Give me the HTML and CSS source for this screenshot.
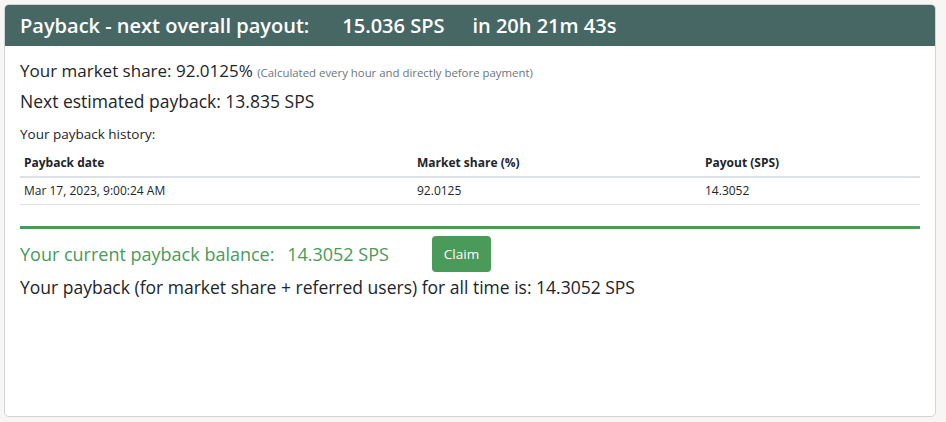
FILE: index.html
```html
<!DOCTYPE html>
<html lang="en">
<head>
    <meta charset="UTF-8">
    <meta name="viewport" content="width=device-width, initial-scale=1.0">
    <title>Payback</title>
    <link rel="stylesheet" href="styles.css">
</head>
<body>
    <div class="card">
        <!-- Header -->
        <div class="card-header">
            <span>Payback - next overall payout:</span>
            <span class="amount">15.036 SPS</span>
            <span class="countdown">in 20h 21m 43s</span>
        </div>

        <div class="card-body">
            <p class="share">Your market share: 92.0125% <small>(Calculated every hour and directly before payment)</small></p>
            <p class="estimate">Next estimated payback: 13.835 SPS</p>

            <p class="history-title">Your payback history:</p>
            <table class="history">
                <thead>
                    <tr>
                        <th class="col-date">Payback date</th>
                        <th class="col-share">Market share (%)</th>
                        <th>Payout (SPS)</th>
                    </tr>
                </thead>
                <tbody>
                    <tr>
                        <td>Mar 17, 2023, 9:00:24 AM</td>
                        <td>92.0125</td>
                        <td>14.3052</td>
                    </tr>
                </tbody>
            </table>

            <div class="balance">
                <span class="balance-text">Your current payback balance: <span class="balance-value">14.3052 SPS</span></span>
                <button class="claim">Claim</button>
            </div>
            <p class="total">Your payback (for market share + referred users) for all time is: 14.3052 SPS</p>
        </div>
    </div>
</body>
</html>
```

FILE: styles.css
```css
body {
    font-family: "Open Sans", "Noto Sans", sans-serif;
    margin: 0;
    padding: 4px 10px 4px 4px;
    background-color: #f7f6f4;
    color: #212529;
}
.card {
    height: 413px;
    box-sizing: border-box;
    background-color: #fff;
    border: 1px solid #d3d3d3;
    border-radius: 5px;
    overflow: hidden;
}
.card-header {
    height: 41px;
    display: flex;
    align-items: center;
    padding: 0 15px;
    background-color: #476765;
    color: #fff;
    font-size: 20px;
    font-weight: 600;
}
.card-header .amount {
    margin-left: 33px;
}
.card-header .countdown {
    margin-left: 28px;
}
.card-body {
    padding: 13px 15px;
}
p {
    margin: 0;
}
.share {
    font-size: 17px;
    line-height: 24px;
}
.share small {
    font-size: 11.4px;
    color: #6c757d;
}
.estimate {
    font-size: 17.5px;
    line-height: 24px;
    margin-top: 4px;
}
.history-title {
    font-size: 13.5px;
    font-weight: 500;
    margin-top: 11px;
    line-height: 20px;
}
.history {
    width: 100%;
    border-collapse: collapse;
    font-size: 12px;
    margin-top: 5px;
}
.history th,
.history td {
    text-align: left;
    padding: 5px 4px;
    border-bottom: 1px solid #dee2e6;
}
.history td {
    padding: 4px 4px 5px;
}
.history th {
    border-bottom-width: 2px;
}
.col-date {
    width: 385px;
}
.col-share {
    width: 280px;
}
.balance {
    margin-top: 21px;
    border-top: 3px solid #4a9a5a;
    padding-top: 7px;
    display: flex;
    align-items: center;
}
.balance-text {
    color: #4a9a5a;
    font-size: 18px;
}
.balance-value {
    margin-left: 8px;
}
.claim {
    margin-left: 43px;
    padding: 9px 12px;
    background-color: #4a9a5a;
    color: #fff;
    border: none;
    border-radius: 4px;
    font-family: inherit;
    font-size: 13.5px;
    cursor: pointer;
}
.total {
    font-size: 17.5px;
    margin-top: 3px;
}
```
